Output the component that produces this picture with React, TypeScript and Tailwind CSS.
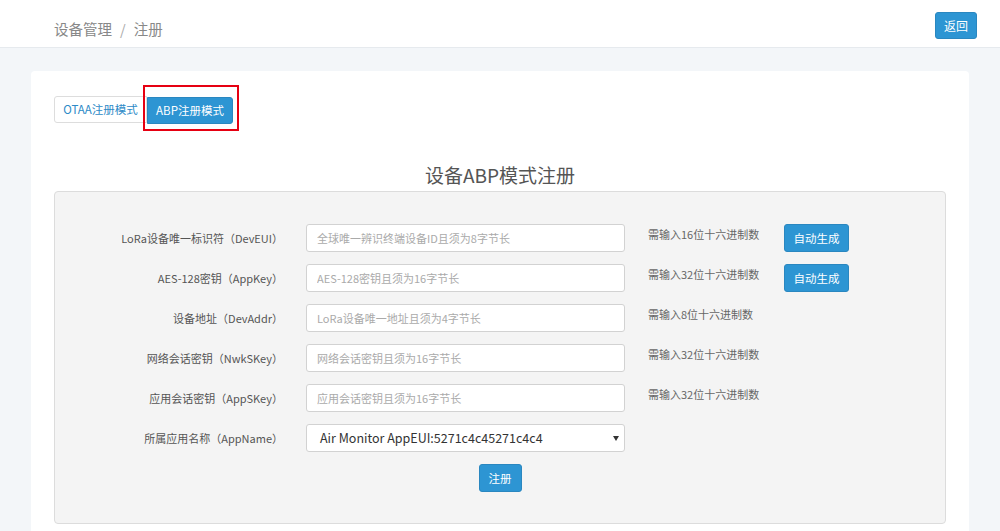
import React from "react";

const rows = [
  {
    label: "LoRa设备唯一标识符（DevEUI）",
    placeholder: "全球唯一辨识终端设备ID且须为8字节长",
    help: "需输入16位十六进制数",
    gen: true,
  },
  {
    label: "AES-128密钥（AppKey）",
    placeholder: "AES-128密钥且须为16字节长",
    help: "需输入32位十六进制数",
    gen: true,
  },
  {
    label: "设备地址（DevAddr）",
    placeholder: "LoRa设备唯一地址且须为4字节长",
    help: "需输入8位十六进制数",
    gen: false,
  },
  {
    label: "网络会话密钥（NwkSKey）",
    placeholder: "网络会话密钥且须为16字节长",
    help: "需输入32位十六进制数",
    gen: false,
  },
  {
    label: "应用会话密钥（AppSKey）",
    placeholder: "应用会话密钥且须为16字节长",
    help: "需输入32位十六进制数",
    gen: false,
  },
];

const font = { fontFamily: '"Noto Sans CJK SC", "Open Sans", sans-serif' };

export default function App() {
  return (
    <div className="min-h-[531px] bg-[#f3f6f9]" style={font}>
      <div className="h-[48px] bg-white border-b border-[#e6eaee] flex items-start justify-between pl-[54px] pr-[23px] pt-[12px]">
        <div className="text-[14.5px] text-[#888] flex gap-[8px] leading-[20px] pt-[7px]">
          <span>设备管理</span>
          <span className="text-[#aaa]">/</span>
          <span>注册</span>
        </div>
        <button className="h-[27px] w-[42px] rounded-[3px] bg-[#2d95d3] border border-[#2a87c0] text-white text-[12px] leading-none">
          返回
        </button>
      </div>

      <div className="px-[31px] pt-[23px]">
        <div className="bg-white rounded-t-[4px] px-[23px] pt-[25px] pb-[8px]">
          <div className="flex">
            <button className="h-[27px] w-[93px] border border-[#ddd] rounded-l-[3px] bg-white text-[#2d8ac7] text-[11.5px] leading-none">
              OTAA注册模式
            </button>
            <div className="relative">
              <button className="h-[27px] w-[86px] rounded-r-[3px] bg-[#2d95d3] border border-[#2a87c0] text-white text-[11.5px] leading-none">
                ABP注册模式
              </button>
              <div className="absolute left-[-4px] top-[-11px] w-[96px] h-[46px] border-2 border-[#e60012]" />
            </div>
          </div>

          <h2 className="text-center text-[19px] text-[#555] mt-[37px] mb-[2px] leading-[28px]">
            设备ABP模式注册
          </h2>

          <div className="bg-[#f4f4f4] border border-[#dcdcdc] rounded-[4px] pt-[32px] pb-[31px]">
            <div className="flex flex-col gap-[12px]">
              {rows.map((r) => (
                <div key={r.label} className="flex items-start h-[28px]">
                  <label className="w-[228px] text-right text-[11px] text-[#555] leading-[28px]">
                    {r.label}
                  </label>
                  <input
                    className="ml-[23px] w-[319px] h-[28px] border border-[#d2d2d2] rounded-[3px] bg-white px-[10px] text-[11px] placeholder:text-[#aaa] outline-none"
                    placeholder={r.placeholder}
                  />
                  <span className="ml-[23px] w-[136px] text-[11px] text-[#666] leading-[18px] pt-[1px]">
                    {r.help}
                  </span>
                  {r.gen && (
                    <button className="h-[28px] w-[65px] rounded-[3px] bg-[#2d95d3] border border-[#2a87c0] text-white text-[11.5px] leading-none">
                      自动生成
                    </button>
                  )}
                </div>
              ))}
              <div className="flex items-start h-[28px]">
                <label className="w-[228px] text-right text-[11px] text-[#555] leading-[28px]">
                  所属应用名称（AppName）
                </label>
                <div className="relative ml-[23px] w-[319px] h-[28px] border border-[#d2d2d2] rounded-[3px] bg-white flex items-center pl-[13px] text-[12.5px] text-[#333]">
                  Air Monitor AppEUI:5271c4c45271c4c4
                  <svg className="absolute right-[5px] top-[11px]" width="6" height="5" viewBox="0 0 6 5">
                    <path d="M0 0 L6 0 L3 5 Z" fill="#333" />
                  </svg>
                </div>
              </div>
              <div className="flex justify-center">
                <button className="h-[28px] w-[43px] rounded-[3px] bg-[#2d95d3] border border-[#2a87c0] text-white text-[11.5px] leading-none">
                  注册
                </button>
              </div>
            </div>
          </div>
        </div>
      </div>
    </div>
  );
}
